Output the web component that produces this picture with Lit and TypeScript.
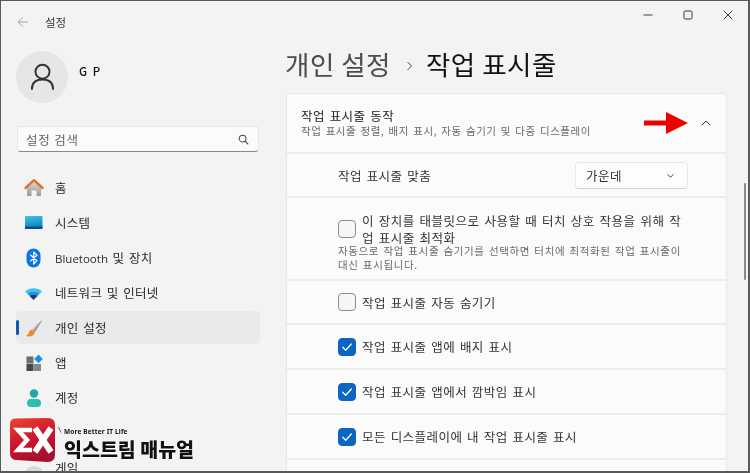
import { LitElement, html, css, svg } from "lit";
import { customElement } from "lit/decorators.js";

const home = svg`<svg viewBox="0 0 20 20" width="20" height="20"><defs><linearGradient id="hw" x1="0" y1="0" x2="0" y2="1"><stop offset="0" stop-color="#d8d8d8"/><stop offset="1" stop-color="#9a9a9a"/></linearGradient></defs><path d="M3 9.5 10 3.5l7 6V18h-4.500v-5.500h-5V18H3z" fill="url(#hw)"/><path d="M1.500 10 10 2.200 18.500 10" fill="none" stroke="#d9732a" stroke-width="2.400" stroke-linecap="round" stroke-linejoin="round"/></svg>`;
const system = svg`<svg viewBox="0 0 20 20" width="20" height="20"><defs><linearGradient id="sy" x1="0" y1="0" x2="0.300" y2="1"><stop offset="0" stop-color="#43c3e0"/><stop offset="1" stop-color="#0f84bf"/></linearGradient></defs><rect x="1" y="3" width="17.500" height="13" rx="1" fill="url(#sy)"/><path d="M1 13.500h17.500V15a1 1 0 0 1-1 1H2a1 1 0 0 1-1-1z" fill="#0d4f84"/></svg>`;
const bluetooth = svg`<svg viewBox="0 0 20 20" width="20" height="20"><rect x="2.500" y="0.500" width="14" height="19" rx="7" fill="#0a78e0"/><path d="M6.300 6.800 13 12.700 9.700 16V4l3.300 3.300L6.300 13.200" fill="none" stroke="#fff" stroke-width="1.200" stroke-linejoin="round"/></svg>`;
const wifi = svg`<svg viewBox="0 0 20 20" width="20" height="20"><path d="M1 8.500C6 4.200 13.500 4.200 18 8.500l-2.300 2.300C12 7.800 7 7.800 3.300 10.800z" fill="#3fc0ee"/><path d="M3.300 10.800C7 7.800 12 7.800 15.700 10.800l-2.200 2.200c-2.300-1.900-5.700-1.900-8 0z" fill="#1b92dc"/><path d="M5.500 13c2.300-1.900 5.700-1.900 8 0l-4 4z" fill="#0b3f7e"/></svg>`;
const brush = svg`<svg viewBox="0 0 20 20" width="20" height="20"><path d="M19 1 8.500 11.500l2.500 2.500z" fill="#8e8e92"/><path d="M19 1 8.500 11.500l1 1z" fill="#c4c4c6"/><path d="M8 11.500c-3 .5-3 3-3.800 4.500-.5 1-1.700 1.500-2.700 1.800C5 19.500 10 18.500 11 14.200z" fill="#ee8a2c"/></svg>`;
const apps = svg`<svg viewBox="0 0 20 20" width="20" height="20"><rect x="2.500" y="3.500" width="7" height="7" fill="#6c6e74"/><rect x="2.500" y="11" width="7" height="7" fill="#44464b"/><rect x="10" y="11" width="7" height="7" fill="#85878c"/><path d="M14.500 1.500 18.800 6l-4.300 4.300L10.200 6z" fill="#1690e0"/></svg>`;
const account = svg`<svg viewBox="0 0 20 20" width="20" height="20"><circle cx="10" cy="5.500" r="4.200" fill="#22a89e"/><rect x="3" y="11" width="14" height="8" rx="4" fill="#2cc0ac"/></svg>`;
const game = svg`<svg viewBox="0 0 20 20" width="20" height="20"><path d="M2 12c2-5 14-5 16 0l1 6H1z" fill="#d5dbde"/></svg>`;
const chevron = (d: string, w = 10) => svg`<svg viewBox="0 0 10 10" width=${w} height=${w}><path d=${d} fill="none" stroke="#333" stroke-width="1" stroke-linecap="round" stroke-linejoin="round"/></svg>`;
const check = svg`<svg viewBox="0 0 18 18" width="18" height="18"><path d="M4.800 9.300 7.700 12.200 13.300 6" fill="none" stroke="#fff" stroke-width="1.300" stroke-linecap="round" stroke-linejoin="round"/></svg>`;
const sliver = svg`<svg class="sliver" viewBox="0 0 4 6" width="4" height="6"><path d="M0.500 0 3 5.500" stroke="#444" stroke-width="0.800"/></svg>`;

const nav = [
  [html`홈`, home],
  [html`시스템`, system],
  [html`<span class="lat">Bluetooth</span> 및 장치`, bluetooth],
  [html`네트워크 및 인터넷`, wifi],
  [html`개인 설정`, brush, true],
  [html`앱`, apps],
  [html`계정`, account],
  [null, null],
  [html`게임`, game],
] as const;

@customElement("app-root")
export class AppRoot extends LitElement {
  static styles = css`
    :host {
      display: block;
      width: 750px;
      height: 473px;
      box-sizing: border-box;
      overflow: hidden;
      position: relative;
      background: #f3f3f3;
      border: solid #58595b;
      border-width: 1px 2px 2px 1px;
      font-family: "Noto Sans CJK KR", "Noto Sans", sans-serif;
      color: #222;
      filter: blur(0.35px);
    }
    .win { display: flex; height: 100%; overflow: hidden; }
    aside { width: 285px; flex: none; padding: 0 0 0 15px; box-sizing: border-box; }
    .top { display: flex; align-items: center; height: 42px; gap: 16px; padding-left: 1px; font-size: 11.500px; color: #333; }
    .top svg { display: block; }
    .user { display: flex; gap: 11px; margin-top: 8px; }
    .avatar { width: 52px; height: 52px; border-radius: 50%; background: #e6e6e6; display: flex; align-items: center; justify-content: center; }
    .gp { font-size: 11.500px; font-weight: 500; letter-spacing: 1.500px; line-height: 16px; margin-top: 12px; color: #111; }
    .search { width: 242px; height: 26px; margin: 23px 0 0 1px; box-sizing: border-box; background: #fbfbfb; border: 1px solid #e5e5e5; border-bottom: 1px solid #8a8a8a; border-radius: 4px; display: flex; align-items: center; justify-content: space-between; padding: 0 9px 0 8px; font-size: 12.500px; color: #666; letter-spacing: 0.800px; }
    .search svg { display: block; }
    ul { list-style: none; margin: 19px 0 0; padding: 0; width: 244px; display: flex; flex-direction: column; gap: 2px; }
    li { height: 33px; flex: none; display: flex; align-items: center; gap: 11px; padding-left: 8px; border-radius: 5px; font-size: 12.500px; color: #2a2a2a; position: relative; letter-spacing: 0.300px; word-spacing: 1.500px; }
    li.on { background: #eaeaea; }
    li.on::before { content: ""; position: absolute; left: 0; top: 9px; width: 3px; height: 15px; border-radius: 2px; background: #0b5cad; }
    .lat { font-family: "Open Sans", sans-serif; font-size: 11.500px; letter-spacing: 0; }
    .ic { width: 20px; height: 20px; flex: none; }
    .ic svg { display: block; }
    .sliver { display: block; margin: -6px 0 0 3px; }
    main { flex: 1; min-width: 0; padding-right: 21px; }
    .controls { display: flex; justify-content: flex-end; align-items: center; gap: 30px; height: 28px; margin-right: -6px; }
    .controls svg { display: block; }
    h1 { margin: 16px 0 0 -1px; font-weight: 400; font-size: 26.500px; line-height: 38px; height: 38px; display: flex; align-items: center; color: #111; letter-spacing: 0.500px; }
    h1 .p { color: #4c4c4c; }
    h1 svg { margin: 3px 12px 0 15px; display: block; }
    .card { margin: 10px 0 0; background: #fbfbfb; border: 1px solid #e8e8e8; border-bottom: 0; border-radius: 4px 4px 0 0; }
    .row { border-bottom: 2px solid #ececec; box-sizing: border-box; display: flex; align-items: center; padding-left: 51px; font-size: 12.500px; color: #333; letter-spacing: 0.450px; word-spacing: 1.500px; }
    .head { height: 60px; padding: 0 15px 0 14px; justify-content: space-between; position: relative; }
    .head .t { font-size: 12.500px; line-height: 15px; color: #222; }
    .head .s { font-size: 10.500px; line-height: 14px; margin-top: 1px; color: #6a6a6a; letter-spacing: 0.500px; word-spacing: 1.500px; }
    .arrow { display: flex; align-items: center; gap: 13px; }
    .arrow svg { display: block; }
    .align { height: 44px; justify-content: space-between; padding-right: 38px; }
    .dd { width: 113px; height: 27px; box-sizing: border-box; background: #fdfdfd; border: 1px solid #e8e8e8; border-bottom-color: #d2d2d2; border-radius: 4px; display: flex; align-items: center; justify-content: space-between; padding: 0 12px 0 10px; }
    .dd svg { display: block; }
    .tab { height: 83px; padding-top: 14px; padding-right: 44px; flex-direction: column; align-items: stretch; justify-content: flex-start; }
    .tab .l { display: flex; align-items: center; gap: 6px; line-height: 17px; letter-spacing: 0.500px; }
    .tab .d { font-size: 10.500px; line-height: 14px; color: #6a6a6a; letter-spacing: 0.630px; word-spacing: 1.300px; margin-top: -2px; word-break: keep-all; }
    .cr { height: 44px; gap: 6px; }
    .cr.b { height: 45px; }
    .box { width: 18px; height: 18px; flex: none; box-sizing: border-box; border-radius: 4px; background: #f6f6f6; border: 1px solid #8c8c8c; }
    .box.c { background: #0a66c2; border-color: #0a66c2; }
    .box svg { display: block; margin: -1px; }
    .end { height: 20px; }
    .scroll { position: absolute; right: 2px; top: 182px; width: 2px; height: 97px; border-radius: 1px; background: #8a8a8a; }
    .mark { position: absolute; left: 9px; top: 416px; display: flex; gap: 8px; align-items: flex-end; }
    .logo { width: 46px; height: 46px; display: block; }
    .words { background: #f3f3f3; width: 138px; height: 37px; margin-bottom: 4px; box-sizing: border-box; padding-top: 4px; }
    .more { font: 700 6.500px/11px "Noto Sans", sans-serif; letter-spacing: 0.150px; color: #111; }
    .brand { font-weight: 900; font-size: 19.500px; line-height: 21px; margin-top: 1px; color: #111; text-shadow: 0 0 2px #fff, 0 0 2px #fff; }
  `;

  render() {
    return html`
      <div class="win">
        <aside>
          <div class="top">
            <svg viewBox="0 0 12 12" width="12" height="12"><path d="M11 6H1.200M5.700 1.500 1.200 6l4.500 4.500" fill="none" stroke="#9a9a9a" stroke-width="0.900"/></svg>
            <span>설정</span>
          </div>
          <div class="user">
            <div class="avatar">
              <svg viewBox="0 0 26 30" width="25" height="29"><circle cx="13" cy="9" r="7.300" fill="none" stroke="#333" stroke-width="2"/><path d="M2 27c0-6.500 4-10 11-10s11 3.500 11 10" fill="none" stroke="#333" stroke-width="2" stroke-linecap="round"/></svg>
            </div>
            <div class="gp">G P</div>
          </div>
          <div class="search">
            <span>설정 검색</span>
            <svg viewBox="0 0 12 12" width="11" height="11"><circle cx="5" cy="5" r="3.700" fill="none" stroke="#444" stroke-width="1.100"/><path d="m7.800 7.800 3.400 3.400" stroke="#444" stroke-width="1.200"/></svg>
          </div>
          <ul>
            ${nav.map(
              ([label, icon, on]) => html`<li class=${on ? "on" : ""}><span class="ic">${icon}</span>${label ? html`<span>${label}</span>` : sliver}</li>`
            )}
          </ul>
        </aside>
        <main>
          <div class="controls">
            <svg viewBox="0 0 10 10" width="10" height="10"><path d="M0.500 5h9" stroke="#444" stroke-width="1"/></svg>
            <svg viewBox="0 0 10 10" width="10" height="10"><rect x="1" y="1" width="8" height="8" rx="1.300" fill="none" stroke="#333" stroke-width="1"/></svg>
            <svg viewBox="0 0 10 10" width="10" height="10"><path d="m0.800 0.800 8.400 8.400M9.200 0.800 0.800 9.200" stroke="#333" stroke-width="1"/></svg>
          </div>
          <h1>
            <span class="p">개인 설정</span>
            ${svg`<svg viewBox="0 0 8 10" width="8" height="10"><path d="m1.500 1 4 4-4 4" fill="none" stroke="#444" stroke-width="1"/></svg>`}
            <span>작업 표시줄</span>
          </h1>
          <div class="card">
            <div class="row head">
              <div>
                <div class="t">작업 표시줄 동작</div>
                <div class="s">작업 표시줄 정렬, 배지 표시, 자동 숨기기 및 다중 디스플레이</div>
              </div>
              <div class="arrow">
                <svg viewBox="0 0 44 22" width="44" height="22"><path d="M0 8.500h22V0l22 11-22 11v-8.500H0z" fill="#ee0000"/></svg>
                ${chevron("M1 7 5 3l4 4")}
              </div>
            </div>
            <div class="row align">
              <span>작업 표시줄 맞춤</span>
              <div class="dd"><span>가운데</span>${chevron("M2 4l3 3 3-3", 9)}</div>
            </div>
            <div class="row tab">
              <div class="l">
                <span class="box"></span>
                <span>이 장치를 태블릿으로 사용할 때 터치 상호 작용을 위해 작업 표시줄 최적화</span>
              </div>
              <div class="d">자동으로 작업 표시줄 숨기기를 선택하면 터치에 최적화된 작업 표시줄이 대신 표시됩니다.</div>
            </div>
            <div class="row cr"><span class="box"></span><span>작업 표시줄 자동 숨기기</span></div>
            <div class="row cr b"><span class="box c">${check}</span><span>작업 표시줄 앱에 배지 표시</span></div>
            <div class="row cr b"><span class="box c">${check}</span><span>작업 표시줄 앱에서 깜박임 표시</span></div>
            <div class="row cr b"><span class="box c">${check}</span><span>모든 디스플레이에 내 작업 표시줄 표시</span></div>
            <div class="end"></div>
          </div>
        </main>
      </div>
      <div class="scroll"></div>
      <div class="mark">
        <svg class="logo" viewBox="0 0 46 46">
          <defs><linearGradient id="lg" x1="0" y1="0" x2="0.400" y2="1"><stop offset="0" stop-color="#f0452c"/><stop offset="0.600" stop-color="#c9142e"/><stop offset="1" stop-color="#a81030"/></linearGradient></defs>
          <path d="M6 1.500 38 1q7 0 7 7v30q0 6.500-7 7l-32-2q-6-.5-6-7V7q0-5.500 6-5.500z" fill="url(#lg)"/>
          <path d="M22 13H8l9 10-9 10h14" fill="none" stroke="#fff" stroke-width="4.500" stroke-linejoin="miter"/>
          <path d="M25 11 41 35M41 11 25 35" fill="none" stroke="#fff" stroke-width="6"/>
        </svg>
        <div class="words">
          <div class="more">More Better IT Life</div>
          <div class="brand">익스트림 매뉴얼</div>
        </div>
      </div>
    `;
  }
}
